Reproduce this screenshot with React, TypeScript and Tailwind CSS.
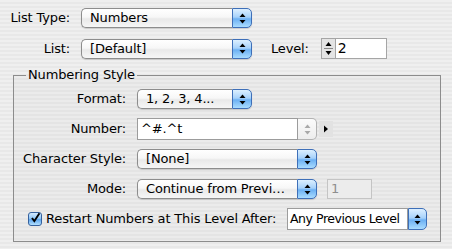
import React from "react";

function Arrows({ color = "#000" }: { color?: string }) {
  return (
    <svg width="7" height="11" viewBox="0 0 7 11">
      <path d="M3.5 0.5 L6.5 4 L0.5 4 Z" fill={color} />
      <path d="M0.5 7 L6.5 7 L3.5 10.5 Z" fill={color} />
    </svg>
  );
}

function Popup({ width, text }: { width: string; text: string }) {
  return (
    <div className={`flex h-[20px] ${width} shrink-0 shadow-[0_1px_1px_rgba(0,0,0,0.15)] rounded-[5px]`}>
      <div className="flex-1 flex items-center pl-[8px] rounded-l-[5px] border border-r-0 border-[#8d8d8d] bg-[linear-gradient(to_bottom,#ffffff_0%,#f7f7f7_45%,#e9e9e9_55%,#f6f6f6_100%)] overflow-hidden whitespace-nowrap">
        {text}
      </div>
      <div className="w-[20px] flex items-center justify-center rounded-r-[5px] border border-[#3e6fb8] bg-[linear-gradient(to_bottom,#dcefff_0%,#a7d2fb_45%,#6cb0f3_55%,#a9dcff_100%)]">
        <Arrows />
      </div>
    </div>
  );
}

function FieldPopup({ text }: { text: string }) {
  return (
    <div className="flex h-[22px] w-[140px] shrink-0">
      <div className="flex-1 flex items-center pl-[2px] border border-[#9c9c9c] bg-white whitespace-nowrap overflow-hidden text-[12.5px] tracking-[-0.45px]">
        {text}
      </div>
      <div className="w-[19px] flex items-center justify-center rounded-r-[5px] border border-[#3e6fb8] bg-[linear-gradient(to_bottom,#dcefff_0%,#a7d2fb_45%,#6cb0f3_55%,#a9dcff_100%)]">
        <Arrows />
      </div>
    </div>
  );
}

function Check() {
  return (
    <div className="w-[14px] h-[14px] rounded-[3px] border border-[#35619e] bg-[linear-gradient(to_bottom,#d3eafe_0%,#92c8f7_45%,#5fa6ee_55%,#b2e0ff_100%)] flex items-center justify-center shrink-0">
      <svg width="14" height="14" viewBox="0 0 14 14" className="-mt-[3px] ml-[1px]">
        <path d="M2.5 7 L5.5 11 L12 1" fill="none" stroke="#000" strokeWidth="2.4" />
      </svg>
    </div>
  );
}

export default function App() {
  return (
    <div
      className="w-[452px] h-[249px] overflow-hidden text-[13px] tracking-[-0.15px] text-black bg-[repeating-linear-gradient(to_bottom,#efefef_0px,#efefef_2px,#e8e8e8_2px,#e8e8e8_4px)]"
      style={{ fontFamily: '"Lucida Grande", "DejaVu Sans", sans-serif' }}
    >
      {/* list type */}
      <div className="flex items-center mt-[8px]">
        <div className="w-[70px] text-right">List Type:</div>
        <div className="ml-[11px]">
          <Popup width="w-[171px]" text="Numbers" />
        </div>
      </div>

      {/* list + level */}
      <div className="flex items-center mt-[10px]">
        <div className="w-[70px] text-right">List:</div>
        <div className="ml-[11px]">
          <Popup width="w-[171px]" text="[Default]" />
        </div>
        <div className="ml-[19px]">Level:</div>
        <div className="ml-[12px] flex h-[21px]">
          <div className="w-[14px] flex flex-col items-center justify-center border border-r-0 border-[#a5a5a5] bg-[#e4e4e4]">
            <svg width="9" height="17" viewBox="0 0 9 17">
              <path d="M4.5 2 L7.5 6 L1.5 6 Z" fill="#000" />
              <path d="M0 8.5 H9" stroke="#888" strokeWidth="1" />
              <path d="M1.5 11 L7.5 11 L4.5 15 Z" fill="#000" />
            </svg>
          </div>
          <div className="w-[52px] flex items-center pl-[2px] border border-[#a5a5a5] bg-white text-[14px]">2</div>
        </div>
      </div>

      {/* numbering style group */}
      <fieldset className="mx-[13px] mt-[8px] w-[428px] h-[175px] border border-[#8c8c8c] bg-black/[0.015] px-0 pb-0">
        <legend className="ml-[12px] px-[2px] leading-[16px]">Numbering Style</legend>

        <div className="flex items-center mt-[6px]">
          <div className="w-[112px] text-right">Format:</div>
          <div className="ml-[11px]">
            <Popup width="w-[115px]" text="1, 2, 3, 4..." />
          </div>
        </div>

        <div className="flex items-center mt-[9px]">
          <div className="w-[112px] text-right">Number:</div>
          <div className="ml-[11px] flex h-[22px] w-[180px]">
            <div className="flex-1 flex items-center pl-[3px] border border-[#9c9c9c] bg-white">^#.^t</div>
            <div className="w-[19px] flex items-center justify-center rounded-r-[5px] border border-l-0 border-[#b2b2b2] bg-[linear-gradient(to_bottom,#fbfbfb,#ededed)]">
              <Arrows color="#a9a9a9" />
            </div>
          </div>
          <div className="ml-[2px] w-[14px] h-[16px] flex items-center justify-center bg-[#e2e2e2]">
            <svg width="6" height="8" viewBox="0 0 6 8">
              <path d="M1 0.5 L5 4 L1 7.5 Z" fill="#000" />
            </svg>
          </div>
        </div>

        <div className="flex items-center mt-[9px]">
          <div className="w-[112px] text-right">Character Style:</div>
          <div className="ml-[11px]">
            <Popup width="w-[180px]" text="[None]" />
          </div>
        </div>

        <div className="flex items-center mt-[10px]">
          <div className="w-[112px] text-right">Mode:</div>
          <div className="ml-[11px]">
            <Popup width="w-[180px]" text="Continue from Previ…" />
          </div>
          <div className="ml-[10px] w-[45px] h-[20px] flex items-center pl-[3px] border border-[#c4c4c4] bg-[#ececec] text-[#8e8e8e]">
            1
          </div>
        </div>

        <div className="flex items-center mt-[9px]">
          <div className="ml-[14px]">
            <Check />
          </div>
          <div className="ml-[4px] whitespace-nowrap">Restart Numbers at This Level After:</div>
          <div className="ml-auto mr-[13px]">
            <FieldPopup text="Any Previous Level" />
          </div>
        </div>
      </fieldset>
    </div>
  );
}
